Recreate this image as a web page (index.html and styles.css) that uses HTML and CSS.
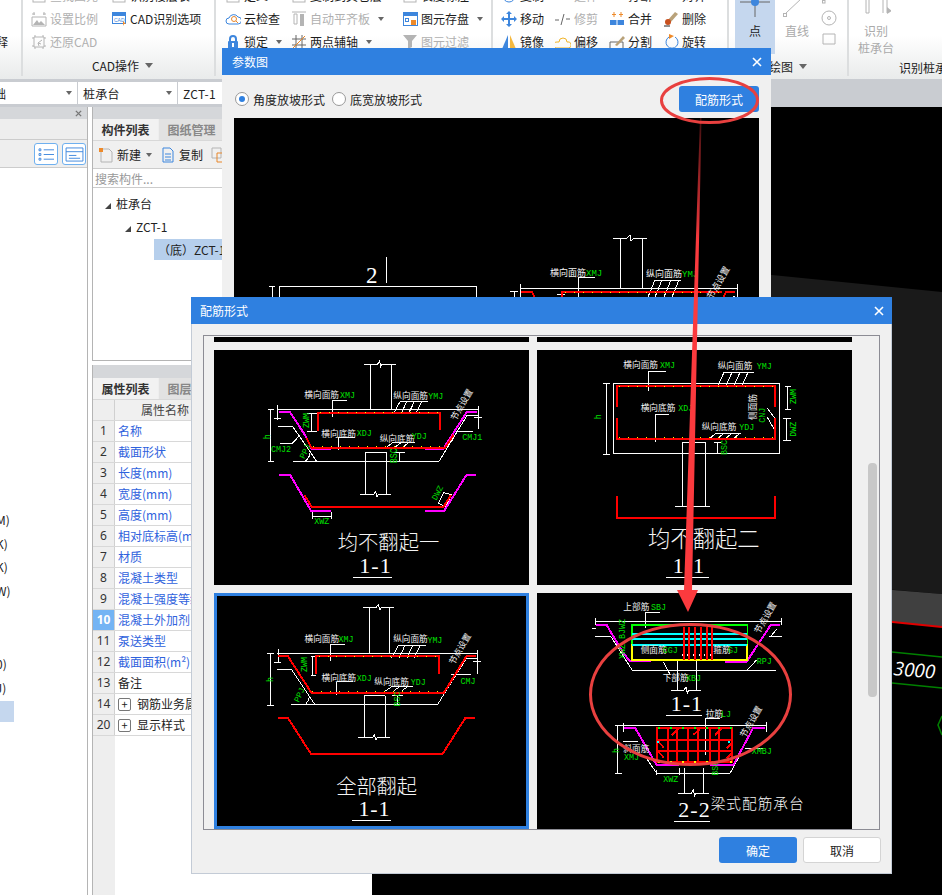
FILE: index.html
```html
<!DOCTYPE html>
<html lang="zh">
<head>
<meta charset="utf-8">
<title>参数图</title>
<link rel="stylesheet" href="styles.css">
</head>
<body>
<div class="app">
  <header class="ribbon">
    <section class="group g0"><div class="rows"><span></span><span></span><span class="item clip">释</span></div></section>
    <section class="group g1">
      <div class="rows">
        <span class="item off"><svg class="ic" viewBox="0 0 16 16"><rect class="sg" x="2" y="2" width="12" height="12"/></svg>查找图元</span>
        <span class="item"><svg class="ic" viewBox="0 0 16 16"><rect class="sg" x="2" y="2" width="12" height="12"/></svg>识别楼层表</span>
        <span class="item off"><svg class="ic" viewBox="0 0 16 16"><path class="sg" d="M1 6h14v9H1zM3 1v3M13 1v3M1 3h3M12 3h3"/><path class="fg" d="M2 14l4-5 2 3 2-2 4 4z"/></svg>设置比例</span>
        <span class="item"><svg class="ic" viewBox="0 0 16 16"><rect class="fb" x="1" y="1" width="14" height="12"/><rect class="fw" x="2" y="5" width="12" height="7"/><text class="ict" x="3" y="11">CAD</text><path class="fo" d="M12 10l3 3-2 0-1 2z"/></svg>CAD识别选项</span>
        <span class="item off"><svg class="ic" viewBox="0 0 16 16"><path class="sg" d="M3 3h10v10H3zM1 4h2M1 12h2M13 4h2M13 12h2M4 1v2M12 1v2M4 13v2M12 13v2M11 6l-4 3 1 3M7 9l3 1"/></svg>还原CAD</span>
      </div>
      <div class="glabel">CAD操作<i class="caret big"></i></div>
    </section>
    <section class="group g2">
      <div class="rows">
        <span class="item"><svg class="ic" viewBox="0 0 16 16"><rect class="sg" x="2" y="2" width="12" height="12"/></svg>定义</span>
        <span class="item"><svg class="ic" viewBox="0 0 16 16"><rect class="sg" x="2" y="2" width="12" height="12"/></svg>复制到其它层</span>
        <span class="item"><svg class="ic" viewBox="0 0 16 16"><rect class="sg" x="2" y="2" width="12" height="12"/></svg>长度标注</span>
        <span class="item"><svg class="ic" viewBox="0 0 16 16"><path class="sb" d="M4 13a3 3 0 0 1 0-6 5 5 0 0 1 9-1 3.500 3.500 0 0 1 0 7z"/><circle class="so" cx="9" cy="8" r="2.500"/><path class="so" d="M11 10l2 2"/></svg>云检查</span>
        <span class="item off"><svg class="ic" viewBox="0 0 16 16"><path class="sg" d="M1 1h14M3 3h3v10H3z"/><rect class="fg" x="9" y="3" width="4" height="12"/></svg>自动平齐板<i class="caret c8"></i></span>
        <span class="item"><svg class="ic" viewBox="0 0 16 16"><rect class="fb" x="1" y="1" width="15" height="14"/><rect class="fw" x="2" y="5" width="13" height="9"/><rect class="sb" x="3.500" y="7.500" width="3" height="3"/><rect class="fo" x="9" y="9" width="5" height="5"/></svg>图元存盘<i class="caret c8"></i></span>
        <span class="item"><svg class="ic" viewBox="0 0 16 16"><path class="sb2" d="M5 8V5a3 3 0 0 1 6 0v3"/><rect class="fb" x="3" y="7" width="10" height="8" rx="1"/><rect class="fw" x="7" y="9" width="2" height="4"/></svg>锁定<i class="caret c8"></i></span>
        <span class="item"><svg class="ic" viewBox="0 0 16 16"><path class="sd" d="M5 1v14M11 1v14M1 5h14M1 11h14"/><path class="so" d="M2 14L14 2"/></svg>两点辅轴<i class="caret c8"></i></span>
        <span class="item off"><svg class="ic" viewBox="0 0 16 16"><path class="fg" d="M1 1h14L10 7v6L6 15V7z"/></svg>图元过滤</span>
      </div>
    </section>
    <section class="group g3">
      <div class="rows">
        <span class="item"><svg class="ic" viewBox="0 0 16 16"><circle class="sb" cx="8" cy="8" r="6"/></svg>复制</span>
        <span class="item off"><svg class="ic" viewBox="0 0 16 16"><path class="sg" d="M2 8h12"/></svg>延伸</span>
        <span class="item"><svg class="ic" viewBox="0 0 16 16"><rect class="fg" x="2" y="2" width="12" height="6"/></svg>打断</span>
        <span class="item"><svg class="ic" viewBox="0 0 16 16"><rect class="fb" x="2" y="2" width="12" height="6"/></svg>对齐</span>
        <span class="item"><svg class="ic" viewBox="0 0 16 16"><path class="fb" d="M8 0l3 3H9v4h4V5l3 3-3 3V9H9v4h2l-3 3-3-3h2V9H3v2L0 8l3-3v2h4V3H5z"/></svg>移动</span>
        <span class="item off"><svg class="ic" viewBox="0 0 16 16"><path class="sd" d="M0 9h4M6 14l3-11M11 8h4"/></svg>修剪</span>
        <span class="item"><svg class="ic" viewBox="0 0 16 16"><rect class="fb" x="1" y="9" width="6.500" height="5"/><rect class="fb" x="8.500" y="9" width="6.500" height="5"/><path class="fo" d="M3 3h1.500v-2h1v2H7v1H5.500v2h-1V4H3zM10 3h1.500v-2h1v2H14v1h-1.500v2h-1V4H10z"/></svg>合并</span>
        <span class="item"><svg class="ic" viewBox="0 0 16 16"><path class="sk" d="M1 15h6"/><path class="fbr" d="M4 10l8-9 3 2-8 9z"/><circle class="fr" cx="5" cy="11" r="3"/></svg>删除</span>
        <span class="item"><svg class="ic" viewBox="0 0 16 16"><path class="fb" d="M7 1v14H1z"/><path class="fy" d="M9 1l6 14H9z"/></svg>镜像</span>
        <span class="item"><svg class="ic" viewBox="0 0 16 16"><path class="sy" d="M1 14a3 3 0 0 1 1-6h2a4 4 0 0 1 8 0 3 3 0 0 1 2 6z"/><path class="sb" d="M4 15h9"/></svg>偏移</span>
        <span class="item"><svg class="ic" viewBox="0 0 16 16"><path class="sd" d="M1 8h13v7H1z"/><path class="fbr" d="M6 11l8-9 2 2-8 8z"/></svg>分割</span>
        <span class="item"><svg class="ic" viewBox="0 0 16 16"><path class="sb" d="M6 3a6 6 0 1 0 6 0"/><path class="fo" d="M6 0l5 2-5 3z"/></svg>旋转</span>
      </div>
    </section>
    <section class="group g4">
      <div class="draw">
        <div class="bigbtn on"><svg class="bic" viewBox="0 0 30 24"><path class="sd" d="M0 4h30M15 0v19"/><circle class="fb" cx="15" cy="4" r="4"/></svg><span>点</span></div>
        <div class="bigbtn off"><svg class="bic" viewBox="0 0 30 24"><path class="sg" d="M4 15L20 0"/><rect class="sg" x="1.500" y="15.500" width="3" height="3"/></svg><span>直线</span></div>
        <div class="smallcol">
          <svg class="sic" viewBox="0 0 16 16"><rect class="sg" x="1.500" y="11.500" width="2.500" height="2.500"/></svg>
          <svg class="sic" viewBox="0 0 16 16"><circle class="sg" cx="8" cy="8" r="7"/><circle class="sg" cx="8" cy="8" r="1.500"/></svg>
          <svg class="sic" viewBox="0 0 16 16"><path class="sg" d="M2 3h12v10H2z"/></svg>
        </div>
      </div>
      <div class="glabel gl4">绘图<i class="caret big"></i></div>
    </section>
    <section class="group g5">
      <div class="draw">
        <div class="bigbtn off wide"><svg class="bic" viewBox="0 0 30 24"><path class="sg" d="M5 0v15h3V0M22 0v15M26 0v15"/><path class="fg" d="M26 9l5 4-5 3z"/></svg><span>识别<br>桩承台</span></div>
      </div>
      <div class="glabel gl5">识别桩承台</div>
    </section>
  </header>

  <div class="combos">
    <div class="combo c1"><span class="clipname">基础</span><i class="caret"></i></div>
    <div class="combo c2"><span>桩承台</span><i class="caret"></i></div>
    <div class="combo c3"><span>ZCT-1</span><i class="caret"></i></div>
  </div>

  <main class="work">
    <aside class="left">
      <div class="panelhead"><svg class="px" viewBox="0 0 8 8"><path d="M1 1L7 7M7 1L1 7"/></svg></div>
      <div class="lefttab"></div>
      <div class="lefttools">
        <span class="tbtn"><svg viewBox="0 0 20 16" class="tic"><path class="sb" d="M2 2h2v2H2zM2 7h2v2H2zM2 12h2v2H2zM7 3h11M7 8h11M7 13h11"/></svg></span>
        <span class="tbtn"><svg viewBox="0 0 20 16" class="tic"><path class="sb" d="M1 1h18v14H1zM1 5h18M4 9h8M4 12h12"/></svg></span>
      </div>
      <ul class="leftlist">
        <li>(M)</li><li>(K)</li><li>(K)</li><li>(W)</li><li class="tall"></li><li class="tall"></li><li>(0)</li><li>(J)</li><li class="sel"></li>
      </ul>
    </aside>

    <div class="mid">
      <section class="comp">
        <div class="panelhead"></div>
        <div class="tabs"><span class="tab active">构件列表</span><span class="tab">图纸管理</span></div>
        <div class="comptools">
          <span class="tool"><svg class="ic" viewBox="0 0 16 16"><path class="sg" d="M3 2h8l3 3v10H3z"/><path class="fo" d="M1 1h4v4H1z"/></svg>新建<i class="caret c5"></i></span>
          <span class="tool"><svg class="ic" viewBox="0 0 16 16"><path class="sb" d="M3 1h7l3 3v11H3zM5 7h6M5 10h6M5 13h6"/></svg>复制</span>
          <span class="tool"><svg class="ic" viewBox="0 0 16 16"><path class="sg" d="M1 1h9v10H1z"/><path class="so" d="M6 6h8v9H6z"/></svg>删除</span>
        </div>
        <div class="search">搜索构件...</div>
        <ul class="tree">
          <li class="t1"><i class="tri"></i>桩承台</li>
          <li class="t2"><i class="tri"></i>ZCT-1</li>
          <li class="t3">（底）ZCT-1</li>
        </ul>
      </section>
      <section class="props">
        <div class="panelhead"></div>
        <div class="tabs"><span class="tab active">属性列表</span><span class="tab">图层管理</span></div>
        <div class="ptable">
          <div class="prow head"><span class="num"></span><span class="name center">属性名称</span></div>
          <div class="prow"><span class="num">1</span><span class="name link">名称</span></div>
          <div class="prow"><span class="num">2</span><span class="name link">截面形状</span></div>
          <div class="prow"><span class="num">3</span><span class="name link">长度(mm)</span></div>
          <div class="prow"><span class="num">4</span><span class="name link">宽度(mm)</span></div>
          <div class="prow"><span class="num">5</span><span class="name link">高度(mm)</span></div>
          <div class="prow"><span class="num">6</span><span class="name link">相对底标高(m)</span></div>
          <div class="prow"><span class="num">7</span><span class="name link">材质</span></div>
          <div class="prow"><span class="num">8</span><span class="name link">混凝土类型</span></div>
          <div class="prow"><span class="num">9</span><span class="name link">混凝土强度等级</span></div>
          <div class="prow"><span class="num cur">10</span><span class="name link">混凝土外加剂</span></div>
          <div class="prow"><span class="num">11</span><span class="name link">泵送类型</span></div>
          <div class="prow"><span class="num">12</span><span class="name link">截面面积(m²)</span></div>
          <div class="prow"><span class="num">13</span><span class="name">备注</span></div>
          <div class="prow"><span class="num">14</span><span class="name"><i class="plus">+</i>钢筋业务属性</span></div>
          <div class="prow"><span class="num">20</span><span class="name"><i class="plus">+</i>显示样式</span></div>
          <div class="pfill"><span class="num"></span></div>
        </div>
      </section>
    </div>

    <div class="canvas">
      <svg class="scene" viewBox="372 107 570 788">
        <path class="pl1" d="M372 235L942 292V594L372 545z"/>
        <path class="pl2" d="M372 545L893 590L942 594V627L372 570z"/>
        <path class="pl0" d="M372 570L942 627V895H372z"/>
        <path class="lr" d="M372 569L942 627"/>
        <path class="lgreen" d="M372 600L942 657M372 631L942 688M942 716L938 725L942 735"/>
        <text class="dim" transform="translate(893 675) rotate(5)">3000</text>
      </svg>
    </div>
  </main>

  <section class="dialog d1">
    <div class="dtitle"><span>参数图</span><svg class="dx" viewBox="0 0 10 10"><path d="M1 1L9 9M9 1L1 9"/></svg></div>
    <div class="d1bar">
      <span class="radio checked"></span><span class="rlabel">角度放坡形式</span>
      <span class="radio"></span><span class="rlabel">底宽放坡形式</span>
      <span class="btn primary form">配筋形式</span>
    </div>
    <div class="d1canvas">
      <svg class="full" viewBox="234 118 525 182">
        <text class="nm big2" x="366" y="283">2</text>
        <path class="w1" d="M386 257V283M269 286h6M272 286V300M279 300V286H476V300M613 238H627L630 235L631 241L634 238H647M620.500 238V288M642.500 238V288M520 284V300M737 284V300M510 291H518M514 291V300M520 288H737M557 294H565M561 294V300"/>
        <path class="w1" d="M578.500 300V277H595M648 297L655 280M655 297L662 280M664 297L671 280M672 297L679 280M655 280H681M727 300L735 296"/>
        <path class="r1" d="M521 292H532L536 300M562 300V292H722M722 300L726 292H735"/>
        <path class="y1" d="M565 292H720"/>
        <text class="cn s9" x="550" y="276">横向面筋</text><text class="en s9" x="586" y="276">XMJ</text>
        <text class="cn s9" x="646" y="277">纵向面筋</text><text class="en s9" x="682" y="277">YMJ</text>
        <text class="cn s9" transform="translate(712 300) rotate(-60)">节点设置</text>
      </svg>
    </div>
  </section>

  <section class="dialog d2">
    <div class="dtitle"><span>配筋形式</span><svg class="dx" viewBox="0 0 10 10"><path d="M1 1L9 9M9 1L1 9"/></svg></div>
    <div class="frame">
      <div class="gallery">
        <div class="strip"></div><div class="strip"></div>

        <div class="cell">
          <svg class="full" viewBox="27 30 945 705">
            <path class="w" d="M478 72H518L524 62L527 80L532 72H572M496 72V208M560 72V208M215 208H820M218 195V240M820 198V268M207 235H228M808 232H830M218 258H262L335 364M265 364H702L787 225H820M188 208H207M188 364H207M196 208V364M306 220H336M306 274H336M320 220V274M482 464V338H545V464M464 464H506L512 454L516 472L520 464H557M225 310H262L285 285M567 338H600M567 364H600M583 338V364M300 364A35 35 0 0 0 315 338M745 274H804M745 290L730 318M722 320L745 298M322 516V536M378 516V536M322 530H378M700 490L716 458L740 464L722 500z"/>
            <path class="w" d="M381 232V182H425M565 222L585 185M588 222L605 185M610 222L628 185M632 222L650 185M585 185H668M400 330V293H450M545 322L565 306M570 322L590 306M594 322L612 306M562 306H630"/>
            <path class="m" d="M222 217H255L300 285L320 326H378M660 326H715L785 217H815M222 404H255L318 512H378M660 512H718L785 404H812"/>
            <path class="r" d="M338 272V218H705V270M305 295L320 324H720L745 285M298 465L320 500H716L738 465"/>
            <path class="y" d="M345 218H700M325 320H715"/>
            <text class="cn" x="298" y="175">横向面筋</text><text class="en" x="405" y="175">XMJ</text>
            <text class="cn" x="565" y="177">纵向面筋</text><text class="en" x="670" y="177">YMJ</text>
            <text class="cn" x="349" y="291">横向底筋</text><text class="en" x="455" y="288">XDJ</text>
            <text class="cn" x="524" y="305">纵向底筋</text><text class="en" x="620" y="298">YDJ</text>
            <text class="en" x="198" y="335">CMJ2</text><text class="en" x="772" y="299">CMJ1</text><text class="en" x="328" y="551">XWZ</text>
            <text class="en" transform="translate(311 264) rotate(-90)">ZWM</text>
            <text class="en" transform="translate(194 298) rotate(-90)">h</text>
            <text class="en" transform="translate(298 358) rotate(-65)">PPJ</text>
            <text class="en" transform="translate(575 370) rotate(-90) scale(1 1.200)">BSC</text>
            <text class="en" transform="translate(694 482) rotate(-62)">DWZ</text>
            <text class="cn" transform="translate(752 244) rotate(-60)">节点设置</text>
            <text class="ti" x="398" y="630">均不翻起一</text>
            <text class="nm" x="463" y="698">1-1</text>
            <path class="w" d="M444 712H560"/>
          </svg>
        </div>

        <div class="cell">
          <svg class="full" viewBox="21 30 945 705">
            <path class="w" d="M250 130H748V340H250zM220 130H240M220 342H240M229 130V342M355 152V95H408M376 305V224H416M562 142L582 97M586 142L606 97M610 142L630 97M634 142L654 97M582 97H672M538 296L558 280M562 296L582 280M586 296L606 280M610 296L630 280M556 280H632M458 500V307H526V500M436 498H540M764 140H782M764 207H782M773 140V207M760 236H782M760 302H782M770 236V302M552 307H572M562 307V340M712 205L735 235M712 232L735 272"/>
            <path class="r" d="M261 200V138H735V200M261 234V298H735V234M261 468V533H735V468"/>
            <path class="y" d="M268 138H730M268 293H730"/>
            <text class="cn" x="280" y="84">横向面筋</text><text class="en" x="390" y="84">XMJ</text>
            <text class="cn" x="563" y="86">纵向面筋</text><text class="en" x="680" y="86">YMJ</text>
            <text class="cn" x="332" y="213">横向底筋</text><text class="en" x="445" y="213">XDJ</text>
            <text class="cn" x="515" y="270">纵向底筋</text><text class="en" x="628" y="270">YDJ</text>
            <text class="en" transform="translate(212 238) rotate(-90)">h</text>
            <text class="cn" transform="translate(677 240) rotate(-90)">侧面筋</text>
            <text class="en" transform="translate(706 248) rotate(-90)">CNJ</text>
            <text class="en" transform="translate(798 192) rotate(-90)">ZWM</text>
            <text class="en" transform="translate(798 290) rotate(-90)">DWZ</text>
            <text class="en" transform="translate(590 345) rotate(-90)">BSC</text>
            <text class="ti tl" x="354" y="622">均不翻起二</text>
            <text class="nm" x="428" y="698">1-1</text>
            <path class="w" d="M408 712H536"/>
          </svg>
        </div>

        <div class="cell picked">
          <svg class="full" viewBox="36 33 927 693">
            <path class="w" d="M474 68H514L520 58L524 76L528 68H568M493 68V206M555 68V206M215 206H818M218 192V236M818 195V268M205 232H226M806 230H828M216 254H258L330 361M258 361H698L785 222H818M185 206H205M185 362H205M195 206V362M316 216H332M316 272H332M323 216V272M478 460V334H541V460M460 460H502L508 450L512 468L516 460H554M562 334H595M562 361H595M578 334V361M298 361A35 35 0 0 0 312 335M740 270H800M740 288L725 316"/>
            <path class="w" d="M376 228V178H420M560 220L580 182M583 220L600 182M606 220L623 182M628 220L646 182M580 182H664M395 330V292H445M540 320L560 306M565 320L585 306M590 320L608 306M558 306H626"/>
            <path class="r" d="M332 268V215H703V268M217 215H248L318 324H718L785 215H815M217 401H248L318 510H713L782 401H812"/>
            <path class="y" d="M340 215H698M320 320H715"/>
            <text class="cn" x="298" y="171">横向面筋</text><text class="en" x="400" y="172">XMJ</text>
            <text class="cn" x="565" y="173">纵向面筋</text><text class="en" x="668" y="175">YMJ</text>
            <text class="cn" x="349" y="288">横向底筋</text><text class="en" x="455" y="288">XDJ</text>
            <text class="cn" x="508" y="300">纵向底筋</text><text class="en" x="618" y="300">YDJ</text>
            <text class="en" x="768" y="297">CMJ</text>
            <text class="en" transform="translate(306 262) rotate(-90)">ZWM</text>
            <text class="en" transform="translate(204 292) rotate(-90)">h</text>
            <text class="en" transform="translate(280 355) rotate(-65)">PPJ</text>
            <text class="en" transform="translate(586 366) rotate(-90) scale(1 1.200)">BSC</text>
            <text class="cn" transform="translate(748 242) rotate(-60)">节点设置</text>
            <text class="ti" x="393" y="630">全部翻起</text>
            <text class="nm" x="460" y="695">1-1</text>
            <path class="w" d="M442 708H557"/>
          </svg>
        </div>

        <div class="cell">
          <svg class="full" viewBox="21 24 945 708">
            <path class="w" d="M197 98V120M755 98V120M197 109H755M345 130V82H390M185 130H197M195 155H243L307 256H738M650 256L680 225M716 155H755M722 155L740 132M442 228V316M498 228V316M423 316H462L468 306L472 324L476 316H512M400 230L420 268M258 422H710M280 415V440M710 410V440M278 470H325M255 422H275M255 566H275M263 422V566M380 565H600M380 565L350 520M600 565L630 510M462 548V625M520 548V625M445 625H484L490 615L494 633L498 625H538M527 510V400H570M380 555V570M448 550V570M645 490H700"/>
            <path class="m" d="M197 120H230L280 205L300 228H362M585 230H650L722 120H750M282 428H315L380 540H448M540 540H610L670 428H705"/>
            <path class="gs" d="M305 178V120H652V178"/>
            <path class="ys" d="M305 178V225H652V178"/>
            <path class="c" d="M305 146H652M305 162H652M305 180H652"/>
            <path class="r" d="M462 125V225M478 125V225M495 125V225M513 125V225M530 125V225M547 125V225M382 428H605V530H382zM382 465H605M382 497H605M413 428V530M440 428V530M475 428V530M505 428V530M540 428V530M568 428V530M425 450L445 432M490 450L510 432M555 450L575 432M385 470L402 488M385 500L402 518M590 490L605 475M590 520L605 505"/>
            <path class="wd" d="M455 210H552"/>
            <path class="gd" d="M385 428H605"/>
            <path class="cd" d="M385 468V500M598 468V500"/>
            <path class="yd" d="M385 530H605"/>
            <text class="cn" x="280" y="75">上部筋</text><text class="en" x="363" y="75">SBJ</text>
            <text class="cn" x="332" y="203">侧面筋</text><text class="en" x="398" y="203">CGJ</text>
            <text class="cn" x="550" y="205">箍筋</text><text class="en" x="594" y="205">GJ</text>
            <text class="en" x="680" y="237">RPJ</text>
            <text class="cn" x="398" y="289">下部筋</text><text class="en" x="468" y="289">XBJ</text>
            <text class="cn" x="527" y="396">拉筋</text><text class="en" x="573" y="396">LJ</text>
            <text class="cn" x="280" y="502">斜面筋</text><text class="en" x="282" y="526">XMJ</text>
            <text class="en" x="665" y="506">XMBJ</text><text class="en" x="400" y="590">XWZ</text>
            <text class="en" transform="translate(285 222) rotate(-90)">XWZ BJWZ</text>
            <text class="en" transform="translate(267 504) rotate(-90)">h</text>
            <text class="en" transform="translate(563 572) rotate(-90)">BSC</text>
            <text class="cn" transform="translate(688 148) rotate(-60)">节点设置</text>
            <text class="cn" transform="translate(645 460) rotate(-60)">节点设置</text>
            <text class="nm" x="422" y="378">1-1</text>
            <path class="w" d="M408 391H515"/>
            <text class="nm" x="445" y="695">2-2</text>
            <path class="w" d="M432 708H540"/>
            <text class="ti sm" x="542" y="672">梁式配筋承台</text>
          </svg>
        </div>
      </div>
      <div class="scroll"><span class="thumb"></span></div>
    </div>
    <div class="dfoot"><span class="btn primary">确定</span><span class="btn plain">取消</span></div>
  </section>

  <svg class="marks" viewBox="0 0 942 895">
    <defs>
      <linearGradient id="fade" x1="0" y1="0" x2="0" y2="1">
        <stop offset="0" stop-color="#fb3a3e" stop-opacity="0.25"/>
        <stop offset="0.25" stop-color="#fb3a3e" stop-opacity="1"/>
        <stop offset="1" stop-color="#fb3a3e"/>
      </linearGradient>
    </defs>
    <path class="arrow" d="M700 118H701.500L692 590H698L688 612L677 590H684z"/>
    <ellipse class="ring" cx="709.500" cy="100.500" rx="48" ry="22"/>
    <ellipse class="ring" cx="690.500" cy="694.500" rx="100" ry="70"/>
  </svg>
</div>
</body>
</html>
```
FILE: styles.css
```css
* { box-sizing: border-box; }
html, body { margin: 0; padding: 0; }
body { font-family: "Noto Sans CJK SC", "Liberation Sans", sans-serif; font-size: 12px; color: #222; background: #fff; }
.app { position: relative; width: 942px; height: 895px; overflow: hidden; display: flex; flex-direction: column; }
ul { list-style: none; margin: 0; padding: 0; }
i { font-style: normal; }

/* ribbon */
.ribbon { height: 79px; flex: none; display: flex; overflow: hidden; background: linear-gradient(#fff 0, #fff 45%, #e9ebeb 100%); }
.group { flex: none; border-right: 2px solid #dcdedf; height: 76px; }
.g0 { width: 23px; }
.g1 { width: 193px; padding-left: 8px; }
.g2 { width: 277px; padding-left: 9px; }
.g3 { width: 236px; padding-left: 8px; }
.g4 { width: 120px; padding-left: 6px; }
.g5 { width: 93px; padding-left: 9px; border-right: 0; }
.rows { display: grid; grid-template-rows: repeat(3, 23px); margin-top: -16px; height: 69px; }
.g0 .rows { grid-template-columns: 23px; }
.g1 .rows { grid-template-columns: 80px 100px; }
.g2 .rows { grid-template-columns: 66px 111px 90px; }
.g3 .rows { grid-template-columns: repeat(4, 54px); }
.item { display: flex; align-items: center; white-space: nowrap; color: #1d1d1d; }
.item.off { color: #b0b0b0; }
.item.clip { margin-left: -4px; }
.ic { width: 16px; height: 16px; margin-right: 3px; flex: none; }
.glabel { height: 24px; display: flex; align-items: center; justify-content: center; color: #1d1d1d; white-space: nowrap; }
.gl4 { margin-top: 54px; position: relative; padding-right: 6px; }
.gl5 { margin-top: 5px; justify-content: flex-start; padding-left: 41px; }
.caret { display: inline-block; width: 0; height: 0; border-left: 3.500px solid transparent; border-right: 3.500px solid transparent; border-top: 4px solid #666; }
.caret.big { border-left-width: 4.500px; border-right-width: 4.500px; border-top-width: 5px; margin-left: 6px; }
.caret.c8 { margin-left: 8px; }
.c5 { margin-left: 5px; }
.draw { display: flex; height: 54px; margin-bottom: -54px; }
.g5 .draw { margin-bottom: 0; height: 50px; }
.bigbtn { display: flex; flex-direction: column; align-items: center; width: 40px; height: 54px; text-align: center; line-height: 17px; }
.bigbtn.on { background: #c5d7ee; color: #1d1d1d; margin-right: 2px; }
.bigbtn.off { color: #aaa; }
.bigbtn.wide { width: 36px; height: 58px; }
.bic { width: 30px; height: 24px; margin-top: -2px; flex: none; }
.smallcol { display: flex; flex-direction: column; gap: 5px; margin-left: 4px; margin-top: -11px; }
.sic { width: 16px; height: 16px; }

/* svg icon paints */
.sg, .sb, .sb2, .so, .sd, .sk, .sy { fill: none; stroke-width: 1; }
.sg { stroke: #b4b4b4; }
.sb { stroke: #3d86dd; }
.sb2 { stroke: #3d86dd; stroke-width: 2; }
.so { stroke: #e8872b; }
.sd { stroke: #666; }
.sk { stroke: #222; }
.sy { stroke: #f0b429; }
.fg { fill: #b4b4b4; }
.fb { fill: #3d86dd; }
.fw { fill: #fff; }
.fo { fill: #ee8a2a; }
.fy { fill: #f5b83d; }
.fr { fill: #c8501e; }
.fbr { fill: #b9a27a; }
.ict { font-family: "Liberation Sans", sans-serif; font-size: 5px; fill: #3d86dd; }

/* combos */
.combos { height: 28px; flex: none; padding: 3px 0; display: flex; gap: 1px; background: #c9ccd1; }
.combo { background: #fff; display: flex; align-items: center; justify-content: space-between; padding: 0 5px; }
.c1 { width: 77px; padding-left: 0; overflow: hidden; }
.c2 { width: 99px; }
.c3 { width: 200px; }
.combo span { font-size: 12px; letter-spacing: .3px; }
.combo .clipname { margin-left: -18px; letter-spacing: 0; }

/* work area */
.work { flex: 1; display: flex; min-height: 0; }
.panelhead { height: 12px; background: #d5d7da; display: flex; justify-content: flex-end; align-items: center; padding-right: 5px; }
.px { width: 7px; height: 7px; }
.px path { stroke: #777; stroke-width: 1.600; fill: none; }
.left { width: 88px; flex: none; border-right: 1px solid #b4b4b4; background: #fff; }
.lefttab { height: 21px; background: #eeeeee; border-bottom: 1px solid #ccc; }
.lefttools { height: 28px; background: #eeeeee; border-bottom: 1px solid #ccc; display: flex; justify-content: flex-end; gap: 4px; padding: 3px 1px 0 0; }
.tbtn { width: 24px; height: 22px; border: 1px solid #6fb0ef; border-radius: 3px; background: #fff; display: flex; align-items: center; justify-content: center; }
.tic { width: 19px; height: 15px; }
.leftlist { margin-top: 340px; }
.leftlist li { height: 23.500px; line-height: 23px; margin-left: -8px; white-space: nowrap; }
.leftlist li.tall { height: 25px; }
.leftlist li.sel { width: 22px; height: 21px; background: #c5d7ee; margin-top: 2px; }
.mid { width: 284px; flex: none; padding-left: 4px; display: flex; flex-direction: column; background: #fff; }
.comp { height: 254px; flex: none; border: 1px solid #b4b4b4; border-width: 0 0 1px 1px; margin-bottom: 4px; }
.tabs { height: 22px; display: flex; background: #eeeeee; border-bottom: 1px solid #d8d8d8; flex: none; }
.tab { width: 65px; text-align: center; line-height: 21px; color: #888; font-weight: 700; background: #e2e2e2; margin-right: 1px; }
.tab.active { color: #333; background: #f2f2f2; }
.comptools { height: 28px; background: #f0f0f0; border-bottom: 1px solid #ccc; display: flex; align-items: center; padding-left: 5px; gap: 8px; }
.tool { display: flex; align-items: center; white-space: nowrap; }
.search { height: 19px; line-height: 19px; color: #999; padding-left: 2px; border-bottom: 1px solid #ccc; }
.tree { padding-top: 4px; }
.tree li { height: 23px; line-height: 23px; white-space: nowrap; }
.tri { display: inline-block; width: 0; height: 0; border-left: 6px solid transparent; border-bottom: 6px solid #444; margin-right: 5px; }
.t1 { padding-left: 12px; }
.t2 { padding-left: 32px; }
.tree .t3 { margin-left: 61px; padding-left: 4px; background: #b6cfec; height: 21px; line-height: 21px; margin-top: 1px; }
.props { flex: 1; display: flex; flex-direction: column; border-left: 1px solid #b4b4b4; min-height: 0; }
.props .panelhead { height: 13px; flex: none; }
.ptable { flex: 1; display: flex; flex-direction: column; }
.prow { height: 21px; display: flex; flex: none; border-bottom: 1px solid #d8d8d8; line-height: 20px; }
.prow.head { background: #f0f0f0; }
.num { width: 22px; flex: none; background: #eeeeee; border-right: 1px solid #d0d0d0; text-align: center; color: #333; font-family: "Noto Sans", sans-serif; font-size: 12px; }
.num.cur { background: #74b4f4; color: #fff; font-weight: 700; }
.name { padding-left: 3px; white-space: nowrap; overflow: hidden; flex: 1; color: #222; display: flex; align-items: center; }
.name.center { justify-content: flex-start; padding-left: 26px; color: #444; }
.name.link { color: #2f62dd; }
.plus { width: 13px; height: 13px; border: 1px solid #777; border-radius: 2px; margin-right: 6px; display: flex; align-items: center; justify-content: center; font-size: 11px; line-height: 11px; }
.pfill { flex: 1; display: flex; }
.pfill .num { border-right: 0; }
.canvas { flex: 1; position: relative; background: #000; min-width: 0; }
.scene { position: absolute; inset: 0; width: 100%; height: 100%; }
.pl0 { fill: #000; }
.pl1 { fill: #1a1a1a; }
.pl2 { fill: #404040; }
.lr { stroke: #e00000; stroke-width: 2; fill: none; }
.lgreen { stroke: #008000; stroke-width: 1.500; fill: none; }
.dim { font-family: "Open Sans", sans-serif; font-style: italic; font-size: 19px; fill: #fff; }

/* dialogs: windows over the application */
.dialog { position: absolute; background: #f0f0f0; display: flex; flex-direction: column; }
.d1 { left: 222px; top: 48px; width: 549px; height: 552px; }
.d2 { left: 191px; top: 297px; width: 701px; height: 577px; border: 1px solid #c3cbd6; border-top: 0; }
.dtitle { height: 27px; flex: none; background: #2f80e0; color: #fff; display: flex; align-items: center; justify-content: space-between; padding: 0 9px 0 10px; }
.d2 .dtitle { margin: 0 -1px; padding-left: 9px; padding-right: 8px; }
.dx { width: 10px; height: 10px; }
.dx path { stroke: #fff; stroke-width: 1.600; fill: none; }
.d1bar { height: 26px; margin: 11px 12px 6px 13px; display: flex; align-items: center; }
.radio { width: 14px; height: 14px; border-radius: 50%; border: 1px solid #999; background: #fff; margin-right: 4px; flex: none; position: relative; }
.radio.checked::after { content: ""; position: absolute; left: 3px; top: 3px; width: 6px; height: 6px; border-radius: 50%; background: #2f80e0; }
.rlabel { margin-right: 7px; white-space: nowrap; font-size: 12px; }
.btn { display: flex; align-items: center; justify-content: center; border-radius: 3px; height: 26px; width: 78px; }
.btn.primary { background: #2f80e0; color: #fff; }
.btn.form { width: 80px; margin-left: auto; }
.btn.plain { background: #fff; border: 1px solid #d4d4d4; color: #222; }
.d1canvas { margin: 0 12px; height: 182px; background: #000; }
.full { display: block; width: 100%; height: 100%; }
.frame { margin: 11px 11px 0 11px; height: 495px; flex: none; border: 1px solid #8c8c94; display: flex; }
.gallery { width: 661px; padding: 1px 0 0 10px; display: grid; grid-template-columns: 315px 315px; grid-template-rows: 5px 235px 236px; column-gap: 8px; row-gap: 8px; }
.strip, .cell { background: #000; }
.cell.picked { border: 3px solid #2f80e0; }
.scroll { flex: 1; padding: 127px 0 0 3px; }
.thumb { display: block; width: 9px; height: 234px; background: #c8c8c8; border-radius: 4px; }
.dfoot { margin: 7px 10px 0 0; display: flex; justify-content: flex-end; gap: 6px; }

/* drawings: coordinates are 3 units per screen pixel */
.w, .r, .m, .y, .c, .gs, .ys, .wd, .gd, .cd, .yd { fill: none; shape-rendering: crispEdges; }
.w { stroke: #fff; stroke-width: 3; }
.r { stroke: #f00; stroke-width: 6; }
.m { stroke: #f0f; stroke-width: 6; }
.y { stroke: #ff0; stroke-width: 3; stroke-dasharray: 3 24; }
.c { stroke: #0ff; stroke-width: 5; }
.gs { stroke: #0f0; stroke-width: 5; }
.ys { stroke: #ff0; stroke-width: 6; }
.wd { stroke: #fff; stroke-width: 6; stroke-dasharray: 3 14; }
.gd { stroke: #0f0; stroke-width: 6; stroke-dasharray: 6 30; }
.cd { stroke: #0ff; stroke-width: 6; stroke-dasharray: 6 26; }
.yd { stroke: #ff0; stroke-width: 6; stroke-dasharray: 6 30; }
.cn { font-family: "Noto Sans CJK SC", sans-serif; font-size: 26px; fill: #f2f2f2; }
.en { font-family: "Liberation Mono", monospace; font-size: 25px; fill: #00e000; }
.cn.s9, .en.s9 { font-size: 9px; }
.ti { font-family: "Noto Sans CJK SC", sans-serif; font-size: 61px; fill: #f4f4f4; font-weight: 300; }
.ti.tl { font-size: 67px; }
.ti.sm { font-size: 44px; letter-spacing: 3px; }
.nm { font-family: "Liberation Serif", serif; font-size: 66px; fill: #fff; letter-spacing: 3px; }
.nm.big2 { font-size: 23px; }
.w1, .r1, .y1 { fill: none; shape-rendering: crispEdges; }
.w1 { stroke: #fff; stroke-width: 1; }
.r1 { stroke: #f00; stroke-width: 2; }
.y1 { stroke: #ff0; stroke-width: 1; stroke-dasharray: 1 8; }

/* red hand annotations */
.marks { position: absolute; left: 0; top: 0; width: 942px; height: 895px; pointer-events: none; }
.ring { fill: none; stroke: #e8403f; stroke-width: 3; }
.arrow { fill: url(#fade); }
```
